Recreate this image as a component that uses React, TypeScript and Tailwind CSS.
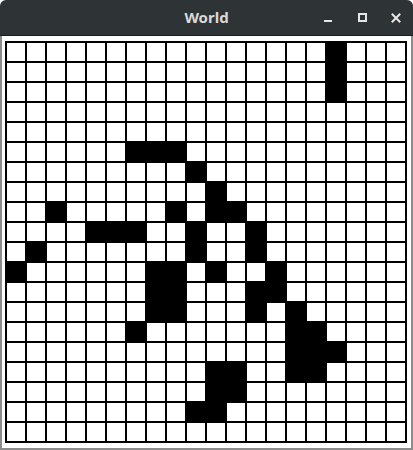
const filled: number[][] = [
  [0, 16],
  [1, 16],
  [2, 16],
  [5, 6], [5, 7], [5, 8],
  [6, 9],
  [7, 10],
  [8, 2], [8, 8], [8, 10], [8, 11],
  [9, 4], [9, 5], [9, 6], [9, 9], [9, 12],
  [10, 1], [10, 9], [10, 12],
  [11, 0], [11, 7], [11, 8], [11, 10], [11, 13],
  [12, 7], [12, 8], [12, 12], [12, 13],
  [13, 7], [13, 8], [13, 12], [13, 14],
  [14, 6], [14, 14], [14, 15],
  [15, 14], [15, 15], [15, 16],
  [16, 10], [16, 11], [16, 14], [16, 15],
  [17, 10], [17, 11],
  [18, 9], [18, 10],
];

const isOn = (r: number, c: number) => filled.some(([a, b]) => a === r && b === c);

const App = () => {
  const cells = [];
  for (let r = 0; r < 20; r++) {
    for (let c = 0; c < 20; c++) {
      cells.push(
        <div
          key={r + "-" + c}
          className={
            "w-[20px] h-[20px] border-r-2 border-b-2 border-black " +
            (isOn(r, c) ? "bg-black" : "bg-white")
          }
        />
      );
    }
  }

  return (
    <div className="w-[413px] h-[450px] flex flex-col bg-white">
      {/* title bar */}
      <div className="relative h-[36px] shrink-0 bg-[#2e3335] rounded-t-[6px] border-b border-[#1b1e1f] flex items-center justify-center">
        <span
          className="text-[15px] font-bold text-[#dadada] leading-none"
          style={{ fontFamily: '"Noto Sans", "Open Sans", sans-serif' }}
        >
          World
        </span>
        <div className="absolute right-0 top-0 h-full flex items-center">
          <div className="w-[34px] h-full flex items-center justify-center">
            <div className="w-[8px] h-[2px] bg-[#e6e6e6] mt-[6px]" />
          </div>
          <div className="w-[34px] h-full flex items-center justify-center">
            <div className="w-[9px] h-[9px] border-2 border-[#e6e6e6]" />
          </div>
          <div className="w-[34px] h-full flex items-center justify-center">
            <svg width="10" height="10" viewBox="0 0 10 10">
              <path d="M1.5 1.5 L8.5 8.5 M8.5 1.5 L1.5 8.5" stroke="#e6e6e6" strokeWidth="2" strokeLinecap="square" />
            </svg>
          </div>
        </div>
      </div>

      {/* content */}
      <div className="flex-1 border-l-2 border-r-2 border-b-2 border-[#8c8c8c] pl-[3px] pt-[5px]">
        <div className="grid grid-cols-[repeat(20,20px)] w-[402px] border-t-2 border-l-2 border-black">
          {cells}
        </div>
      </div>
    </div>
  );
};

export default App;
